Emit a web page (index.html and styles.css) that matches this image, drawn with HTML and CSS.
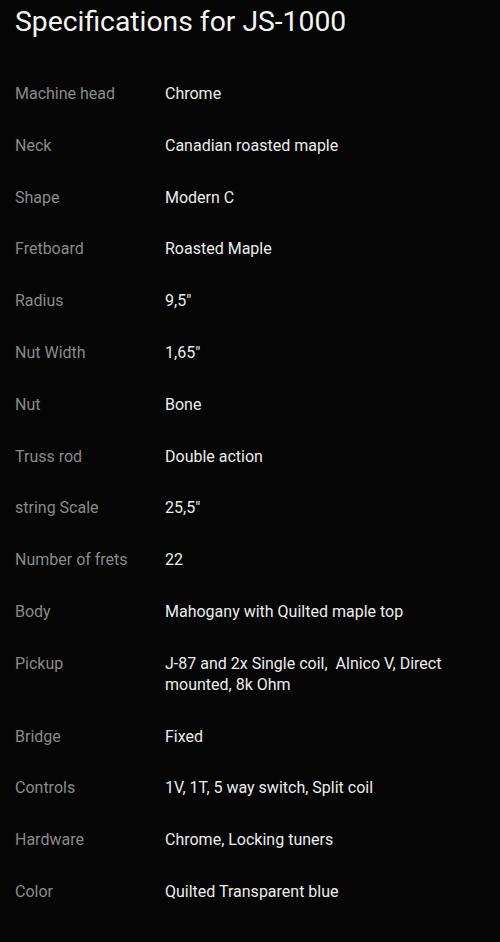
FILE: index.html
```html
<!DOCTYPE html>
<html lang="en">

<head>
    <meta charset="UTF-8">
    <meta name="viewport" content="width=device-width, initial-scale=1.0">
    <title>Specifications for JS-1000</title>
    <link rel="stylesheet" href="styles.css">
</head>

<body>

    <div class="container">
        <h1>Specifications for JS-1000</h1>

        <table class="spec-table">
            <tbody>
                <tr><td>Machine head</td><td>Chrome</td></tr>
                <tr><td>Neck</td><td>Canadian roasted maple</td></tr>
                <tr><td>Shape</td><td>Modern C</td></tr>
                <tr><td>Fretboard</td><td>Roasted Maple</td></tr>
                <tr><td>Radius</td><td>9,5"</td></tr>
                <tr><td>Nut Width</td><td>1,65"</td></tr>
                <tr><td>Nut</td><td>Bone</td></tr>
                <tr><td>Truss rod</td><td>Double action</td></tr>
                <tr><td>string Scale</td><td>25,5"</td></tr>
                <tr><td>Number of frets</td><td>22</td></tr>
                <tr><td>Body</td><td>Mahogany with Quilted maple top</td></tr>
                <tr><td>Pickup</td><td>J-87 and 2x Single coil,&nbsp; Alnico V, Direct mounted, 8k Ohm</td></tr>
                <tr><td>Bridge</td><td>Fixed</td></tr>
                <tr><td>Controls</td><td>1V, 1T, 5 way switch, Split coil</td></tr>
                <tr><td>Hardware</td><td>Chrome, Locking tuners</td></tr>
                <tr><td>Color</td><td>Quilted Transparent blue</td></tr>
            </tbody>
        </table>
    </div>

</body>

</html>
```

FILE: styles.css
```css
body {
    font-family: Roboto, "Noto Sans", sans-serif;
    background-color: #050505;
    color: #ececec;
    margin: 0;
    padding: 0;
}

.container {
    padding: 0 15px 24px;
}

h1 {
    font-size: 28.3px;
    font-weight: 400;
    color: #f4f4f4;
    margin: 0;
    padding: 6px 0 30px;
    line-height: 32px;
}

.spec-table {
    width: 100%;
    border-collapse: collapse;
    font-size: 16px;
    line-height: 21px;
}

.spec-table td {
    padding: 15px 0 15.8px;
    vertical-align: top;
}

.spec-table td:first-child {
    width: 150px;
    color: #8a8a8a;
}
```
